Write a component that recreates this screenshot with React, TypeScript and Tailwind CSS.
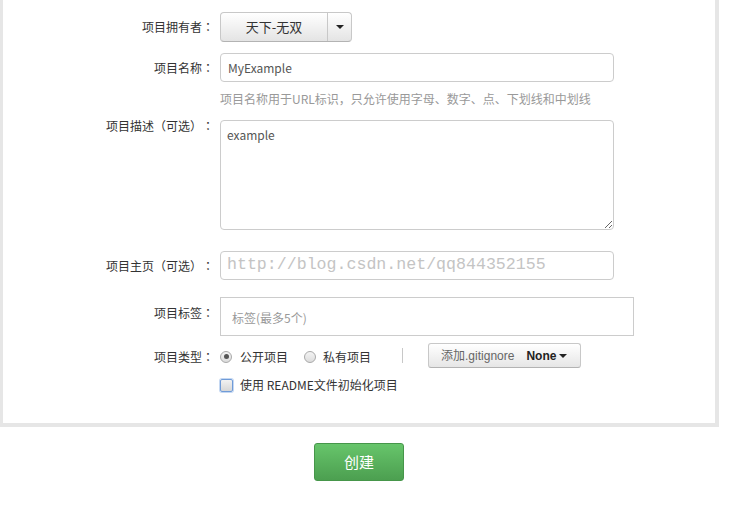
import React from "react";

const FONT = { fontFamily: '"Noto Sans CJK SC", "Noto Sans", sans-serif' };
const TC = { fontFamily: '"Noto Sans CJK TC", "Noto Sans CJK SC", sans-serif' };

function P({ children }: { children: React.ReactNode }) {
  return <span style={TC}>{children}</span>;
}

function Label({ children, className = "" }: { children: React.ReactNode; className?: string }) {
  return (
    <div className={`w-[217px] shrink-0 text-right text-[12px] text-[#333] pr-[6px] whitespace-nowrap ${className}`}>{children}</div>
  );
}

function Radio({ checked }: { checked?: boolean }) {
  return (
    <span className="relative inline-block w-[12px] h-[12px] rounded-full border border-[#a9a9a9] bg-gradient-to-b from-[#f4f4f4] to-[#dcdcdc]">
      {checked && (
        <span className="absolute left-[2.5px] top-[2.5px] w-[5px] h-[5px] rounded-full bg-[#555]" />
      )}
    </span>
  );
}

export default function App() {
  return (
    <div className="w-[756px] h-[507px] bg-white overflow-hidden [text-spacing-trim:space-all]" style={FONT}>
      <div className="w-[719px] h-[427px] border-l-[3px] border-r-[4px] border-b-[4px] border-[#e6e6e6] bg-white flex flex-col">
        {/* owner */}
        <div className="flex items-center mt-[12px] h-[30px]">
          <Label className="leading-[30px]">项目拥有者<P>：</P></Label>
          <div className="flex h-[30px] w-[132px] rounded-[4px] border border-[#c8c8c8] border-b-[#b3b3b3] bg-gradient-to-b from-[#ffffff] to-[#e4e4e4]">
            <div className="w-[106px] flex items-center justify-center text-[13px] text-[#333]">天下-无双</div>
            <div className="flex-1 border-l border-[#c8c8c8] flex items-center justify-center">
              <span className="w-0 h-0 border-l-[4px] border-r-[4px] border-t-[4px] border-l-transparent border-r-transparent border-t-[#222]" />
            </div>
          </div>
        </div>
        {/* name */}
        <div className="flex items-center mt-[11px] h-[29px]">
          <Label className="leading-[29px]">项目名称<P>：</P></Label>
          <div className="w-[394px] h-[29px] rounded-[4px] border border-[#ccc] flex items-center pl-[7px] text-[12px] text-[#555]">
            MyExample
          </div>
        </div>
        <div className="flex mt-[10px] h-[14px]">
          <div className="w-[217px] shrink-0" />
          <div className="text-[12px] leading-[14px] text-[#999] whitespace-nowrap">
            项目名称用于URL标识，只允许使用字母、数字、点、下划线和中划线
          </div>
        </div>
        {/* description */}
        <div className="flex items-start mt-[14px]">
          <Label className="leading-[12px]">项目描述<P>（</P>可选<P>）：</P></Label>
          <textarea
            readOnly
            defaultValue="example"
            className="w-[394px] h-[110px] rounded-[4px] border border-[#ccc] px-[6px] py-[5px] text-[12px] leading-[18px] text-[#555] outline-none"
            style={FONT}
          />
        </div>
        {/* homepage */}
        <div className="flex items-center mt-[21px] h-[29px]">
          <Label className="leading-[29px]">项目主页<P>（</P>可选<P>）：</P></Label>
          <div
            className="w-[394px] h-[29px] rounded-[4px] border border-[#ccc] flex items-center pl-[6px] text-[16.6px] text-[#c4c4c4] whitespace-nowrap overflow-hidden"
            style={{ fontFamily: '"Liberation Mono", monospace' }}
          >
            http://blog.csdn.net/qq844352155
          </div>
        </div>
        {/* tags */}
        <div className="flex items-start mt-[17px]">
          <Label className="leading-[12px] pt-[10px]">项目标签<P>：</P></Label>
          <div className="w-[414px] h-[39px] border border-[#ccc] flex items-center pl-[11px] pt-[3px] text-[12px] text-[#999]">
            标签(最多5个)
          </div>
        </div>
        {/* type */}
        <div className="flex items-center mt-[7px] h-[25px]">
          <Label className="leading-[25px] pt-[2px]">项目类型<P>：</P></Label>
          <div className="flex items-center h-[25px] text-[12px] text-[#333] pt-[2px]">
            <Radio checked />
            <span className="ml-[8px]">公开项目</span>
            <span className="ml-[16px] flex"><Radio /></span>
            <span className="ml-[7px]">私有项目</span>
          </div>
          <div className="ml-[31px] w-px h-[15px] bg-[#c8c8c8]" />
          <div className="ml-[25px] h-[25px] w-[153px] rounded-[3px] border border-[#c8c8c8] border-b-[#b3b3b3] bg-gradient-to-b from-[#ffffff] to-[#e6e6e6] flex items-center pl-[12px] text-[12px] whitespace-nowrap">
            <span className="text-[#666]" style={{ fontFamily: '"Liberation Sans", "Noto Sans CJK SC", sans-serif' }}>添加.gitignore</span>
            <span className="ml-[12px] font-bold text-[#222]" style={{ fontFamily: '"Liberation Sans", sans-serif' }}>None</span>
            <span className="ml-[3px] w-0 h-0 border-l-[4px] border-r-[4px] border-t-[4px] border-l-transparent border-r-transparent border-t-[#222]" />
          </div>
        </div>
        {/* checkbox */}
        <div className="flex items-center mt-[10px] h-[14px]">
          <div className="w-[217px] shrink-0" />
          <span className="inline-block w-[13px] h-[13px] rounded-[2px] border border-[#6f9bd8] bg-gradient-to-b from-[#f2f2f2] to-[#d6d6d6] shadow-[0_0_0_1px_#c5d8f2]" />
          <span className="ml-[7px] text-[12px] text-[#333]">使用 README文件初始化项目</span>
        </div>
      </div>
      <div className="flex pl-[314px] pt-[16px]">
        <button className="w-[90px] h-[38px] rounded-[3px] border border-[#46964a] bg-gradient-to-b from-[#67c56b] to-[#4c9f50] text-white text-[15px]" style={FONT}>
          创建
        </button>
      </div>
    </div>
  );
}
